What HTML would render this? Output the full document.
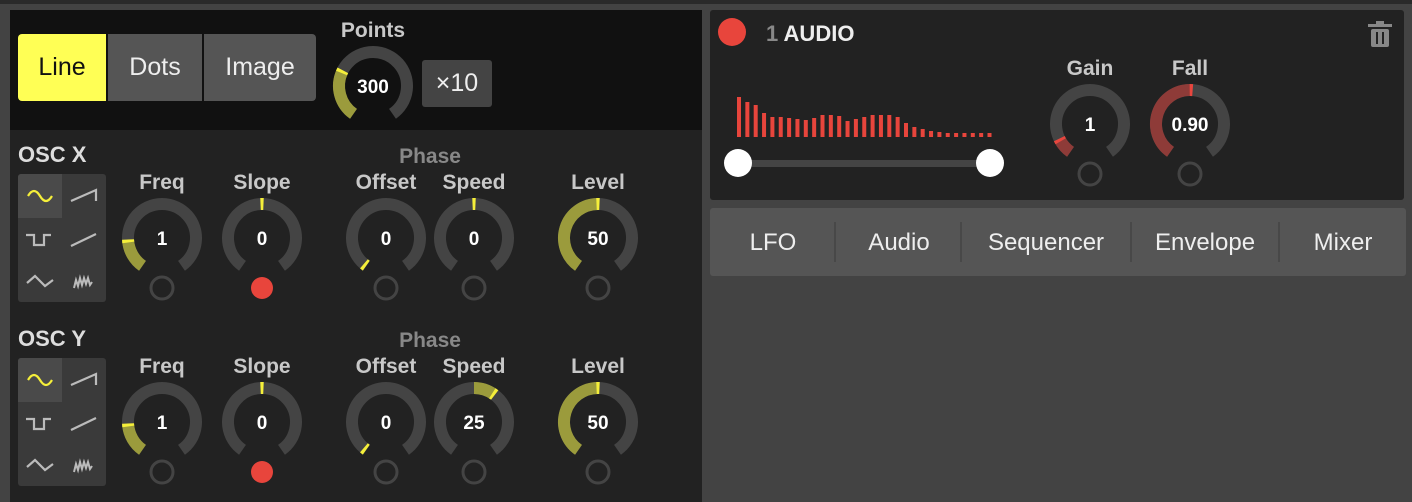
<!DOCTYPE html>
<html><head><meta charset="utf-8"><style>
*{margin:0;padding:0;box-sizing:border-box}
body{width:1412px;height:502px;background:#434343;position:relative;overflow:hidden;font-family:"Liberation Sans",sans-serif}
.a{position:absolute}
.lbl{position:absolute;font-weight:bold;font-size:21px;color:#c8c8c8;text-align:center;width:100px;transform:translateX(-50%)}
.btn{position:absolute;top:34px;height:67px;background:#555;color:#eee;font-size:25px;display:flex;align-items:center;justify-content:center}
.tab{position:absolute;top:222px;height:42px;font-size:24px;color:#eee;transform:translateX(-50%);line-height:42px}
.dv{position:absolute;top:222px;width:2px;height:40px;background:#484848}
</style></head><body>
<div class="a" style="left:0;top:0;width:1412px;height:4px;background:#2a2a2a"></div>
<div class="a" style="left:10px;top:10px;width:692px;height:120px;background:#111"></div>
<div class="a" style="left:10px;top:130px;width:692px;height:372px;background:#222"></div>
<div class="a" style="left:710px;top:10px;width:694px;height:190px;background:#222;border-radius:3px"></div>
<div class="a" style="left:710px;top:208px;width:696px;height:68px;background:#555;border-radius:3px"></div>

<div class="btn" style="left:18px;width:88px;background:#ffff55;color:#111;border-radius:4px 0 0 4px">Line</div>
<div class="btn" style="left:108px;width:94px">Dots</div>
<div class="btn" style="left:204px;width:112px;border-radius:0 4px 4px 0">Image</div>
<div class="lbl" style="left:373px;top:19px">Points</div>
<div class="a" style="left:422px;top:60px;width:70px;height:47px;background:#444;border-radius:3px;color:#eee;font-size:25px;display:flex;align-items:center;justify-content:center">×10</div>

<div class="a" style="left:18px;top:142px;font-weight:bold;font-size:22px;color:#ddd">OSC X</div>
<div class="a" style="left:18px;top:326px;font-weight:bold;font-size:22px;color:#ddd">OSC Y</div>
<div class="lbl" style="left:430px;top:145px;color:#888">Phase</div>
<div class="lbl" style="left:430px;top:329px;color:#888">Phase</div>
<div class="lbl" style="left:162px;top:171px">Freq</div><div class="lbl" style="left:262px;top:171px">Slope</div>
<div class="lbl" style="left:386px;top:171px">Offset</div><div class="lbl" style="left:474px;top:171px">Speed</div>
<div class="lbl" style="left:598px;top:171px">Level</div>
<div class="lbl" style="left:162px;top:355px">Freq</div><div class="lbl" style="left:262px;top:355px">Slope</div>
<div class="lbl" style="left:386px;top:355px">Offset</div><div class="lbl" style="left:474px;top:355px">Speed</div>
<div class="lbl" style="left:598px;top:355px">Level</div>

<div class="a" style="left:18px;top:174px;width:88px;height:128px;background:#3a3a3a;border-radius:3px"></div>
<div class="a" style="left:18px;top:174px;width:44px;height:44px;background:#4a4a4a;border-radius:3px 0 0 0"></div>
<div class="a" style="left:18px;top:358px;width:88px;height:128px;background:#3a3a3a;border-radius:3px"></div>
<div class="a" style="left:18px;top:358px;width:44px;height:44px;background:#4a4a4a;border-radius:3px 0 0 0"></div>

<div class="a" style="left:718px;top:18px;width:28px;height:28px;border-radius:50%;background:#e8453c"></div>
<div class="a" style="left:766px;top:21px;font-weight:bold;font-size:22px;color:#eee"><span style="color:#888">1</span> AUDIO</div>
<div class="lbl" style="left:1090px;top:57px">Gain</div>
<div class="lbl" style="left:1190px;top:57px">Fall</div>

<div class="tab" style="left:773px">LFO</div><div class="tab" style="left:899px">Audio</div>
<div class="tab" style="left:1046px">Sequencer</div><div class="tab" style="left:1205px">Envelope</div>
<div class="tab" style="left:1343px">Mixer</div>
<div class="dv" style="left:834px"></div><div class="dv" style="left:960px"></div>
<div class="dv" style="left:1130px"></div><div class="dv" style="left:1278px"></div>

<svg id="s" class="a" style="left:0;top:0" width="1412" height="502"></svg>
<script>
var s='';
function P(cx,cy,r,a){a=a*Math.PI/180;return [cx+r*Math.sin(a),cy-r*Math.cos(a)];}
function arc(cx,cy,r,a0,a1,col,w){var p=P(cx,cy,r,a0),q=P(cx,cy,r,a1);var l=(a1-a0)>180?1:0;
return '<path d="M'+p[0].toFixed(2)+' '+p[1].toFixed(2)+' A'+r+' '+r+' 0 '+l+' 1 '+q[0].toFixed(2)+' '+q[1].toFixed(2)+'" fill="none" stroke="'+col+'" stroke-width="'+w+'"/>';}
var S=-145,E=145;
function knob(cx,cy,v,f0,f1,red,txt,mod){
 var fc=red?'#8e3b38':'#9b9b3c',tc=red?'#e8463e':'#f5ef3a';
 s+=arc(cx,cy,34,S,E,'#444',12);
 if(f1>f0)s+=arc(cx,cy,34,f0,f1,fc,12);
 s+=arc(cx,cy,34,v-2.5,v+2.5,tc,12);
 s+='<text x="'+cx+'" y="'+(cy+7)+'" fill="#fff" font-family="Liberation Sans" font-weight="bold" font-size="19" text-anchor="middle">'+txt+'</text>';
 if(mod===1)s+='<circle cx="'+cx+'" cy="'+(cy+50)+'" r="11" fill="#e8453c"/>';
 else if(mod!==2)s+='<circle cx="'+cx+'" cy="'+(cy+50)+'" r="11" fill="none" stroke="#444" stroke-width="3"/>';
}
knob(373,86,-65,S,-65,0,'300',2);
[238,422].forEach(function(y,i){
 knob(162,y,-95,S,-95,0,'1');
 knob(262,y,0,0,0,0,'0',1);
 knob(386,y,S+3,0,0,0,'0');
 if(i==0)knob(474,y,0,0,0,0,'0');else knob(474,y,35,0,35,0,'25');
 knob(598,y,0,S,0,0,'50');
 var b=y-42,st='fill="none" stroke-width="2.2" stroke-linejoin="miter"';
 s+='<path d="M28 '+(b)+' q6 -10 12 0 t12 0" '+st+' stroke="#f5ef3a"/>';
 s+='<path d="M71 '+(b+5)+' L96 '+(b-6)+' L96 '+(b+5)+'" '+st+' stroke="#bbb"/>';
 s+='<path d="M26 '+(b+39)+' H34 V'+(b+49)+' H44 V'+(b+39)+' H51" '+st+' stroke="#bbb"/>';
 s+='<path d="M71 '+(b+50)+' L96 '+(b+38)+'" '+st+' stroke="#bbb"/>';
 s+='<path d="M27 '+(b+87)+' L35 '+(b+80)+' L45 '+(b+90)+' L53 '+(b+84)+'" '+st+' stroke="#bbb"/>';
 s+='<path d="M74 '+(b+92)+' l2 -8 l2 6 l2 -8 l2 7 l2 -7 l2 6 l2 -6 l2 7 l2 -3" fill="none" stroke="#bbb" stroke-width="2"/>';
});
knob(1090,124,-118,S,-118,1,'1');
knob(1190,124,2,S,2,1,'0.90');
var h=[40,35,32,24,20,20,19,18,17,19,22,22,21,16,18,20,22,22,22,20,14,10,8,6,5,4,4,4,4,4,4];
for(var i=0;i<h.length;i++){s+='<rect x="'+(737+i*8.35)+'" y="'+(137-h[i])+'" width="4" height="'+h[i]+'" fill="#e8453c"/>';}
s+='<rect x="738" y="160" width="252" height="7" fill="#444"/><circle cx="738" cy="163" r="14" fill="#fff"/><circle cx="990" cy="163" r="14" fill="#fff"/>';
s+='<rect x="1371" y="29" width="18" height="18" rx="2" fill="#888"/><rect x="1368" y="24" width="24" height="3" fill="#888"/><rect x="1376" y="21" width="8" height="3" fill="#888"/><rect x="1376" y="32" width="2" height="12" fill="#222"/><rect x="1382" y="32" width="2" height="12" fill="#222"/>';
document.getElementById('s').innerHTML=s;
</script>
</body></html>
